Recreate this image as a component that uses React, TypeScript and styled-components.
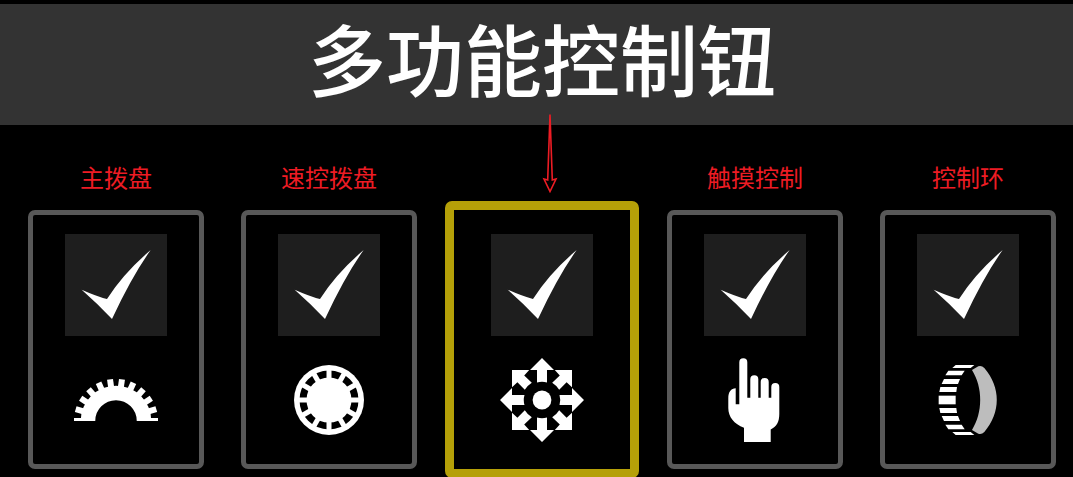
import React from "react";
import styled, { createGlobalStyle } from "styled-components";

const GlobalStyle = createGlobalStyle`
  *, *::before, *::after { box-sizing: border-box; }
  body {
    margin: 0;
    background: #000;
    font-family: "Noto Sans CJK SC", "Noto Sans", sans-serif;
  }
`;

const Page = styled.main`
  min-height: 100vh;
  padding-top: 4px;
  overflow: clip;
  background: #000;
`;

const Header = styled.header`
  padding: 0 17px 15px 28px;
  background: #333;
  text-align: center;
`;

const Title = styled.h1`
  margin: 0;
  color: #fff;
  font-size: 78px;
  font-weight: 500;
  line-height: 106px;
`;

const Controls = styled.section`
  display: grid;
  grid-template-columns: repeat(5, minmax(0, 1fr));
  column-gap: 37px;
  padding: 36px 17px 8px 28px;
`;

const Control = styled.div`
  display: flex;
  flex-direction: column;
  gap: 17px;
`;

const Caption = styled.label`
  color: #ed1c24;
  font-size: 24px;
  line-height: 32px;
  text-align: center;
  white-space: nowrap;
`;

const PointerSlot = styled.div`
  position: relative;
  height: 32px;
`;

const Pointer = styled.svg`
  position: absolute;
  left: 50%;
  bottom: 0;
  width: 16px;
  height: 80px;
`;

const Card = styled.div<{ $selected: boolean }>`
  display: flex;
  flex-direction: column;
  align-items: center;
  gap: 22px;
  margin: ${(p) => (p.$selected ? "-9px" : "0")};
  padding: ${(p) => (p.$selected ? "24px 5px 27px" : "19px 0 22px")};
  border: ${(p) => (p.$selected ? "9px solid #b5a008" : "5px solid #585858")};
  border-radius: 7px;
`;

const Tile = styled.div`
  display: grid;
  width: 102px;
  height: 102px;
  background: #1e1e1e;

  > * {
    grid-area: 1 / 1;
  }
`;

const Checkbox = styled.input`
  width: 100%;
  height: 100%;
  margin: 0;
  appearance: none;
  cursor: pointer;

  &:not(:checked) + svg {
    visibility: hidden;
  }
`;

const Tick = styled.svg`
  width: 102px;
  height: 102px;
  pointer-events: none;
`;

const Icon = styled.svg`
  display: block;
  width: 84px;
  height: 84px;
  overflow: visible;
`;

const dialTeeth = Array.from({ length: 12 }, (_, i) => -90 + (i * 180) / 11);

const MainDialIcon = () => (
  <Icon viewBox="0 0 84 84" fill="#fff" aria-hidden="true">
    <clipPath id="dial-half">
      <rect x="-1" y="0" width="86" height="63" />
    </clipPath>
    <g clipPath="url(#dial-half)">
      <circle cx="42" cy="63" r="28" fill="none" stroke="#fff" strokeWidth="14.5" />
      {dialTeeth.map((a) => (
        <rect key={a} x="39" y="21" width="6" height="9" transform={`rotate(${a} 42 63)`} />
      ))}
    </g>
  </Icon>
);

const QuickDialIcon = () => (
  <Icon viewBox="0 0 84 84" aria-hidden="true">
    <circle cx="42" cy="42" r="35" fill="#fff" />
    <circle cx="42" cy="42" r="26" fill="none" stroke="#000" strokeWidth="7" />
    {[0, 30, 60, 90, 120, 150].map((a) => (
      <path key={a} d="M42 11V73" stroke="#fff" strokeWidth="5" transform={`rotate(${a} 42 42)`} />
    ))}
  </Icon>
);

const MultiControllerIcon = () => (
  <Icon viewBox="-42 -42 84 84" fill="#fff" aria-hidden="true">
    <circle r="9.4" />
    {[0, 90, 180, 270].map((a) => (
      <g key={a} transform={`rotate(${a})`}>
        <path d="M0 -42L12 -30H5V-17.5Q0 -19 -5 -17.5V-30H-12Z" />
        <path
          d="M-30 -30H-12.8L-17.8 -24.6L-10.2 -17.2Q-14.5 -14.5 -17.2 -10.2L-24.6 -17.8L-30 -12.8Z"
        />
      </g>
    ))}
  </Icon>
);

const TouchIcon = () => (
  <Icon viewBox="0 0 84 84" fill="#fff" aria-hidden="true">
    <path d="M26.3 46.3V4.2a4 4 0 0 1 8 0V39.7H37.3V21.2a4 4 0 0 1 8 0V39.7H47.7V24a4 4 0 0 1 8 0V39.7H58.3V29a4 4 0 0 1 8 0V56C66.3 64 63.5 68.5 57.7 71.5V84H31V69.7C21 66 15.3 59 15.3 50V40.3C15.3 34 18 30.5 22.7 30.3V46.3Z" />
  </Icon>
);

const ringBars = [
  "M92 30H148L137 39H82Z",
  "M70 47H119L110 61H61Z",
  "M57 72H105L99 87H50Z",
  "M46 96H96L94 111H43Z",
];

const ControlRingIcon = () => (
  <Icon viewBox="0 0 84 84" fill="#fff" aria-hidden="true">
    <g transform="translate(-1 -3) scale(0.3333)">
      {ringBars.map((d) => (
        <g key={d}>
          <path d={d} />
          <path d={d} transform="matrix(1 0 0 -1 0 270)" />
        </g>
      ))}
      <path d="M41 122H92V148H41Z" />
      <path
        d="M141 45L160 34Q170 31 178 39C228 98 228 172 178 231Q170 239 160 236L141 225C174 172 174 98 141 45Z"
        fill="#bdbdbd"
      />
    </g>
  </Icon>
);

interface ControlItem {
  id: string;
  name: string;
  icon: React.ReactNode;
  selected?: boolean;
}

const items: ControlItem[] = [
  { id: "main-dial", name: "主拨盘", icon: <MainDialIcon /> },
  { id: "quick-dial", name: "速控拨盘", icon: <QuickDialIcon /> },
  { id: "multi-controller", name: "多功能控制钮", icon: <MultiControllerIcon />, selected: true },
  { id: "touch", name: "触摸控制", icon: <TouchIcon /> },
  { id: "control-ring", name: "控制环", icon: <ControlRingIcon /> },
];

export default function App() {
  return (
    <>
      <GlobalStyle />
      <Page>
        <Header>
          <Title id="title">多功能控制钮</Title>
        </Header>
        <Controls>
          {items.map(({ id, name, icon, selected = false }) => (
            <Control key={id}>
              {selected ? (
                <PointerSlot>
                  <Pointer viewBox="0 0 16 80" aria-hidden="true">
                    <path
                      d="M8 1.5L5.7 67L2 66L8 78.5L14 66L10.3 67Z"
                      fill="none"
                      stroke="#ed1c24"
                      strokeWidth="1.6"
                    />
                  </Pointer>
                </PointerSlot>
              ) : (
                <Caption htmlFor={id}>{name}</Caption>
              )}
              <Card $selected={selected}>
                <Tile>
                  <Checkbox
                    id={id}
                    type="checkbox"
                    defaultChecked
                    aria-labelledby={selected ? "title" : undefined}
                  />
                  <Tick viewBox="15 27 306 306" fill="#fff" aria-hidden="true">
                    <path d="M65 194Q110 214 141 222Q190 145 272 75Q215 155 156 282Q112 235 65 194Z" />
                  </Tick>
                </Tile>
                {icon}
              </Card>
            </Control>
          ))}
        </Controls>
      </Page>
    </>
  );
}
